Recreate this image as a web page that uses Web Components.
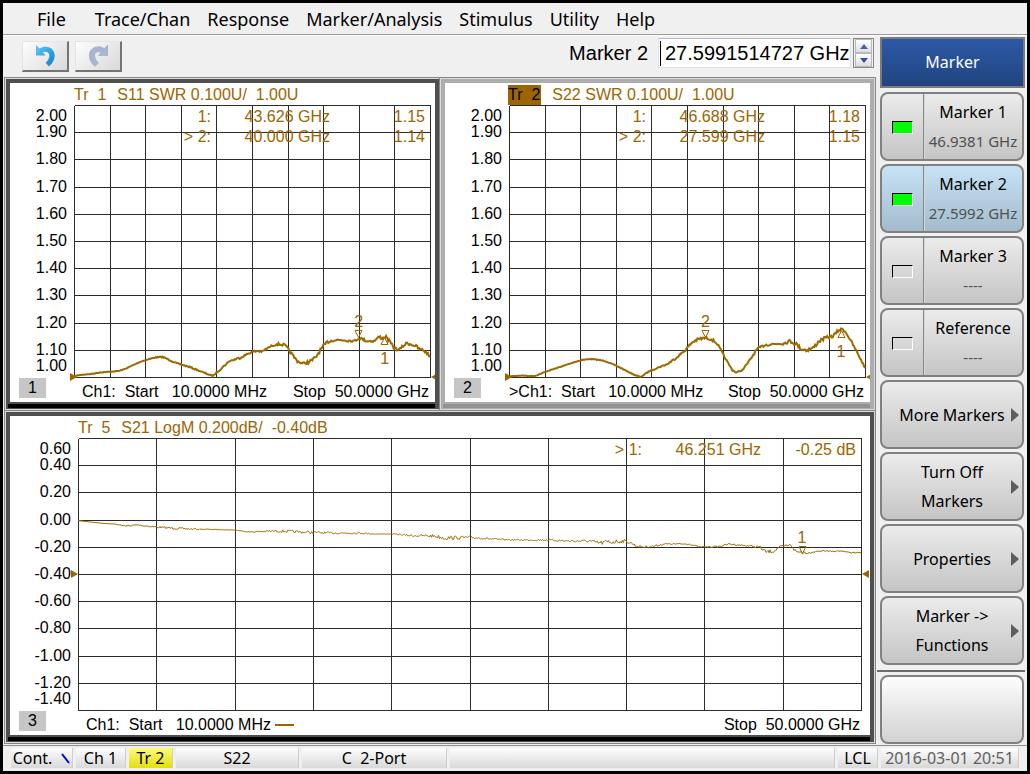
<!DOCTYPE html>
<html lang="en">
<head>
<meta charset="utf-8">
<title>Network Analyzer</title>
<style>
  body { margin: 0; min-height: 100vh; display: grid; background: #000; font-family: "Liberation Sans", Arial, sans-serif; font-size: 16px; color: #000; }
</style>
</head>
<body>
<analyzer-shell>
  <menu-bar slot="menu"></menu-bar>
  <tool-bar slot="tools"></tool-bar>
  <plot-window number="1" trace="s11"></plot-window>
  <plot-window number="2" trace="s22" active></plot-window>
  <plot-window number="3" trace="s21" wide></plot-window>
  <side-panel slot="side" heading="Marker">
    <marker-key name="Marker 1" value="46.9381 GHz" on></marker-key>
    <marker-key name="Marker 2" value="27.5992 GHz" on selected></marker-key>
    <marker-key name="Marker 3" value="----"></marker-key>
    <marker-key name="Reference" value="----"></marker-key>
    <soft-key more>More Markers</soft-key>
    <soft-key more>Turn Off<br>Markers</soft-key>
    <soft-key more>Properties</soft-key>
    <soft-key more>Marker -&gt;<br>Functions</soft-key>
    <soft-key slot="extra" blank></soft-key>
  </side-panel>
  <status-bar slot="status">
    <status-cell style="--w:62px">Cont.<svg width="9" height="11" viewBox="0 0 9 11" style="margin-left:9px"><path d="M1 1L8 10" stroke="#0000e8" stroke-width="2"/></svg></status-cell>
    <status-cell style="--w:50px">Ch 1</status-cell>
    <status-cell style="--w:44px" hot>Tr 2</status-cell>
    <status-cell style="--w:123px">S22</status-cell>
    <status-cell style="--w:145px">C&nbsp; 2-Port</status-cell>
    <status-cell grow></status-cell>
    <status-cell style="--w:40px">LCL</status-cell>
    <status-cell style="--w:138px" dim>2016-03-01 20:51</status-cell>
  </status-bar>
</analyzer-shell>

<script>
function mount(el, html) {
  const t = document.createElement('template');
  t.innerHTML = html;
  el.attachShadow({ mode: 'open' }).append(t.content.cloneNode(true));
  return el.shadowRoot;
}

customElements.define('analyzer-shell', class extends HTMLElement {
  constructor() {
    super();
    mount(this, `<style>
      :host { display: grid; grid-template-rows: auto 1fr auto; margin: 3px; background: #f0f0f0; }
      .body { display: grid; grid-template-columns: minmax(0, 1fr) 150px; }
      .left { display: grid; grid-template-rows: auto 1fr; }
      main { display: grid; grid-template-columns: repeat(2, minmax(0, 1fr)); grid-template-rows: 1fr 1fr; gap: 3px 2px; padding: 2px 3px; }
    </style>
    <slot name="menu"></slot>
    <div class="body">
      <div class="left"><slot name="tools"></slot><main><slot></slot></main></div>
      <slot name="side"></slot>
    </div>
    <slot name="status"></slot>`);
  }
});

customElements.define('menu-bar', class extends HTMLElement {
  constructor() {
    super();
    mount(this, `<style>
      :host { display: block; border-bottom: 1px solid #9a9a9a; box-shadow: 0 1px #fff; margin-bottom: 1px; }
      nav { display: flex; gap: 17px; padding: 0 34px; height: 31px; align-items: center; }
      button { all: unset; font: 18px/24px "Noto Sans", sans-serif; white-space: nowrap; }
      button:first-child { margin-right: 12px; }
    </style>
    <nav>${['File', 'Trace/Chan', 'Response', 'Marker/Analysis', 'Stimulus', 'Utility', 'Help'].map(t => `<button>${t}</button>`).join('')}</nav>`);
  }
});

customElements.define('tool-bar', class extends HTMLElement {
  constructor() {
    super();
    const arrow = 'M0 0V10.5H9.5L6.8 7.3C11 5.6 14.4 8 13 12.5C12.3 15 11 16.4 9.6 17.8L13 21.4C16.4 18.6 19 14.5 18.6 9.6C18 2.4 9.6 -.6 3.6 3.6Z';
    mount(this, `<style>
      :host { display: flex; align-items: center; height: 41px; padding: 0 3px 0 19px; gap: 6px; box-sizing: border-box; }
      .hist { width: 47px; height: 31px; padding: 0; border: solid; border-width: 1px 2px 2px 1px; border-color: #e4e4e4 #747474 #747474 #e4e4e4; background: linear-gradient(135deg, #fdfdfd, #d9d9d9); display: grid; place-items: center; }
      label { margin-left: auto; font-size: 20px; padding-right: 4px; align-self: start; line-height: 34px; }
      .field { display: flex; align-items: center; align-self: start; margin-top: 2px; width: 193px; height: 30px; box-sizing: border-box; background: #fff; border: 1px solid #dfe3e8; border-top-color: #b5b9bf; padding: 1px 0 1px 1px; }
      .field i { width: 1px; height: 25px; background: #000; }
      input { flex: 1; min-width: 0; border: 0; padding: 0 0 0 4px; background: none; outline: 0; font: 20px/24px "Liberation Sans", Arial, sans-serif; color: #000; }
      .spin { display: grid; grid-template-rows: 1fr 1fr; width: 21px; height: 30px; box-sizing: border-box; align-self: start; margin: 2px 0 0 -4px; border: 1px solid #888; background: #f0f0f0; }
      .spin button { border: 1px solid #b9b9b9; margin: 0 1px; padding: 0; background: linear-gradient(#fff, #dedede); display: grid; place-items: center; }
    </style>
    <button class="hist" aria-label="Undo"><svg width="19" height="22" viewBox="0 0 19 22"><defs><linearGradient id="g" x1="0" x2="1" y1="0" y2="1"><stop offset="0" stop-color="#63c8f7"/><stop offset="1" stop-color="#0b83cd"/></linearGradient></defs><path d="${arrow}" fill="url(#g)"/></svg></button>
    <button class="hist" aria-label="Redo"><svg width="19" height="22" viewBox="0 0 19 22"><path d="${arrow}" fill="#a9b5d0" stroke="#9aa8c6" stroke-width=".6" transform="matrix(-1 0 0 1 19 0)"/></svg></button>
    <label for="v">Marker 2</label>
    <div class="field"><i></i><input id="v" value="27.5991514727 GHz"></div>
    <div class="spin">
      <button aria-label="Up"><svg width="8" height="5"><path d="M4 0L8 5H0Z" fill="#4a62a8"/></svg></button>
      <button aria-label="Down"><svg width="8" height="5"><path d="M4 5L8 0H0Z" fill="#3350a5"/></svg></button>
    </div>`);
  }
});

/* Each trace: plot-space size, axis labels, readouts, markers and
   sample points as [x, y, ripple], y growing downwards. */
const swrAxis = ['2.00', '1.90', '1.80', '1.70', '1.60', '1.50', '1.40', '1.30', '1.20', '1.10', '1.00'];
const TRACES = {
  s11: {
    w: 357, h: 272, id: 'Tr  1', title: 'S11 SWR 0.100U/  1.00U', channel: 'Ch1:', axis: swrAxis, ref: 272,
    reads: [['1:', '43.626 GHz', '1.15'], ['> 2:', '40.000 GHz', '1.14']],
    marks: [['2', 285.5, 233, 'down'], ['1', 311.5, 232, 'up']],
    pts: [[0,271,0],[6,270,0],[17,269,.3],[26,267.5,.3],[45,266,.3],[51,264,.3],[66,257,.3],[72,255,.3],[81,252.5,.5],[89,252,.6],[96,255,.6],[102,258,.6],[116,262,.6],[126,266,.5],[139,271,.5],[146,265,.7],[156,256,.8],[166,253,1],[178,247,1],[184,246,1.2],[189,246.5,1],[196,242,.8],[203,239,1.2],[211,240,1.2],[214,243,1.2],[219,250,1.5],[224,256,1.2],[229,258.5,1],[236,257,1.8],[242,253,1.8],[247,245,1.8],[254,237,1.5],[261,235,1.2],[271,235,1.4],[281,236,1],[286,233,1.6],[294,236,1.2],[301,236,1],[306,232,1.8],[310,233,2],[312,231,2],[316,236,1.6],[321,243,1.5],[326,245,1.5],[330,241,1.2],[334,238,1.5],[341,240,2.2],[346,244,1.8],[350,245,1.6],[354,248,1.5],[357,252,1]]
  },
  s22: {
    w: 357, h: 272, id: 'Tr  2', title: 'S22 SWR 0.100U/  1.00U', channel: '>Ch1:', axis: swrAxis, ref: 272,
    reads: [['1:', '46.688 GHz', '1.18'], ['> 2:', '27.599 GHz', '1.15']],
    marks: [['2', 197, 233, 'down'], ['1', 333, 225, 'up']],
    pts: [[0,271.5,.4],[12,270.5,.3],[21,271,.3],[26,271,.3],[36,267,.2],[51,262,.2],[66,257,.2],[73,255,.3],[81,254,.3],[91,255,.3],[96,256,.3],[106,260,.3],[116,265,.3],[126,270,.3],[132,272,.3],[141,266,.6],[151,262,.6],[159,259,.7],[166,254,1],[176,246,1],[184,237,1.4],[191,234,1.6],[197,233,1.4],[203,234,1.4],[209,239,1],[214,248,1],[219,257,.8],[224,265,.6],[228,267.5,.5],[234,265,.6],[241,256,1],[248,245,1.4],[256,240,1.2],[266,239,1.4],[276,238,1.4],[282,236,1.8],[288,239,1.8],[293,244,1.8],[299,245,1.8],[305,243,1.8],[311,236,2],[317,233,1.5],[325,231,1.5],[331,225,1.5],[335,224,1.5],[339,229,1.5],[344,238,1.2],[351,251,1],[357,263,.8]]
  },
  s21: {
    w: 784, h: 272, id: 'Tr  5', title: 'S21 LogM 0.200dB/  -0.40dB', channel: 'Ch1:', ref: 136,
    axis: ['0.60', '0.40', '0.20', '0.00', '-0.20', '-0.40', '-0.60', '-0.80', '-1.00', '-1.20', '-1.40'],
    reads: [['> 1:', '46.251 GHz', '-0.25 dB']],
    marks: [['1', 725, 116, 'down']],
    pts: [[0,82.5,0],[12,84,0],[27,85.5,0],[37,86,.2],[47,88,.8],[60,87,.8],[78,89,.9],[92,90,1.1],[112,91,.8],[137,91.5,.2],[157,92,.2],[172,94,.4],[182,93.5,.7],[202,93,1.4],[222,94,1.4],[252,95,1],[282,95,1],[297,96,.2],[317,96,.3],[332,97.5,1],[357,98,1.7],[367,100,2],[392,99.5,1.6],[402,100,1],[422,101.5,.7],[447,102,.7],[472,102,1],[492,103,1.3],[512,103,1.4],[522,105,2],[532,104,3],[547,103,1.6],[554,105,1.4],[559,108,1.2],[567,109,1.2],[577,108,1.2],[587,106,.7],[612,106,.7],[622,109,.7],[642,108.5,.8],[652,106,.8],[672,108,1],[682,109,1.6],[689,114,1.8],[697,113,1.8],[702,109,1],[714,107,1.6],[719,114,2],[725,114,2],[730,115,1],[742,113,.6],[762,113,.7],[772,114.5,.7],[784,115,.7]]
  }
};

function tracePath(pts) {
  let seed = 7, d = '';
  const rnd = () => (seed = (seed * 16807) % 2147483647) / 2147483647 * 2 - 1;
  for (let i = 0; i < pts.length - 1; i++) {
    const [x0, y0, a0] = pts[i], [x1, y1, a1] = pts[i + 1];
    for (let x = x0; x < x1; x++) {
      const t = (x - x0) / (x1 - x0);
      d += (d ? 'L' : 'M') + x + ' ' + (y0 + (y1 - y0) * t + (a0 + (a1 - a0) * t) * rnd()).toFixed(1);
    }
  }
  const last = pts[pts.length - 1];
  return d + 'L' + last[0] + ' ' + last[1];
}

customElements.define('trace-plot', class extends HTMLElement {
  connectedCallback() {
    if (this.shadowRoot) return;
    const t = TRACES[this.getAttribute('trace')];
    const pc = (v, m) => (v / m * 100).toFixed(2) + '%';
    let lines = '';
    for (let i = 0; i <= 10; i++) {
      lines += `<line x1="${i * 10}%" x2="${i * 10}%" y1="0" y2="100%"/><line y1="${i * 10}%" y2="${i * 10}%" x1="0" x2="100%"/>`;
    }
    mount(this, `<style>
      :host { display: block; position: relative; color: #9c6500; }
      svg { overflow: visible; display: block; }
      .layer { position: absolute; inset: 0; width: 100%; height: 100%; }
      .grid { stroke: #2b2b2b; shape-rendering: crispEdges; transform: translate(.5px, .5px); }
      .trace { fill: none; stroke: #9c6a00; stroke-width: var(--pen, 2px); vector-effect: non-scaling-stroke; }
      table { position: absolute; top: 2px; right: 5px; border-collapse: collapse; line-height: 20px; text-align: right; white-space: pre; }
      td { padding: 0; }
      td:nth-child(2) { width: 119px; }
      td:nth-child(3) { width: 95px; }
      .mark { position: absolute; width: 10px; margin-left: -5px; display: flex; flex-direction: column; align-items: center; line-height: 16px; }
      .down { transform: translateY(-100%); }
      .up { flex-direction: column-reverse; gap: 6px; }
      .ref { position: absolute; margin-top: -5px; }
      .l { left: var(--ref, -4px); } .r { right: -8px; }
    </style>
    <svg class="layer grid">${lines}</svg>
    <svg class="layer" viewBox="0 0 ${t.w} ${t.h}" preserveAspectRatio="none"><path class="trace" d="${tracePath(t.pts)}"/></svg>
    <table>${t.reads.map(r => `<tr>${r.map(c => `<td>${c.replace('>', '&gt;')}</td>`).join('')}</tr>`).join('')}</table>
    ${t.marks.map(([n, x, y, dir]) => `<div class="mark ${dir}" style="left:${pc(x, t.w)};top:${pc(y, t.h)}"><span>${n}</span><svg width="9" height="8" viewBox="0 0 9 8"><path d="${dir === 'down' ? 'M1 .5H8L4.5 7.5Z' : 'M1 7.5H8L4.5 .5Z'}" fill="none" stroke="#9c6500"/></svg></div>`).join('')}
    <svg class="ref l" style="top:${pc(t.ref, t.h)}" width="7" height="10"><path d="M0 1L7 5L0 9Z" fill="#9c6500"/></svg>
    <svg class="ref r" style="top:${pc(t.ref, t.h)}" width="7" height="10"><path d="M7 1L0 5L7 9Z" fill="#9c6500"/></svg>`);
  }
});

customElements.define('plot-window', class extends HTMLElement {
  connectedCallback() {
    if (this.shadowRoot) return;
    const t = TRACES[this.getAttribute('trace')];
    mount(this, `<style>
      :host { --frame: #4f4f4f; --shade: #000; --axis: 64px; --end: 5px; display: flex; flex-direction: column; background: var(--frame); padding: 4px 4px 1px; box-shadow: 0 0 0 1px #dcdcdc, 0 0 0 2px #858585; }
      :host([active]) { --frame: #adadad; --shade: #929292; }
      :host([wide]) { grid-column: 1 / -1; --axis: 68px; --end: 9px; --ref: -7px; --pen: 1px; }
      .view { flex: 1; display: grid; grid-template-columns: var(--axis) minmax(0, 1fr) var(--end); grid-template-rows: 22px minmax(220px, 1fr) 25px; background: #fff; overflow: hidden; }
      .shade { height: 4px; margin: 2px 0 0 -2px; background: var(--shade); }
      .title { grid-column: 2; display: flex; gap: 11px; align-items: center; color: #9c6500; white-space: pre; line-height: 20px; padding-top: 1px; }
      :host([active]) .id { background: #9c6500; color: #000; margin-left: -1px; padding-right: 1px; }
      .axis { grid-column: 1; display: flex; flex-direction: column; text-align: right; padding: 0 7px; line-height: 22px; }
      .axis span { flex: 2 1 0; min-height: 0; display: flex; align-items: center; justify-content: flex-end; }
      .axis span:first-child { flex-grow: 1; align-items: flex-start; }
      .axis span:last-child { flex-grow: 1; align-items: flex-end; }
      .badge { width: 27px; height: 20px; margin: 1px 0 0 9px; background: #c6c6c6; text-align: center; line-height: 20px; }
      .foot { display: flex; align-items: center; padding: 0 1px 0 8px; white-space: pre; height: 30px; line-height: 20px; }
      :host([active]) .foot { padding-left: 0; }
      .foot b { width: 19px; height: 2px; margin-left: 4px; background: #9c6500; display: none; }
      :host([wide]) .foot b { display: block; }
      .stop { margin-left: auto; }
    </style>
    <div class="view">
      <div class="title"><span class="id">${t.id}</span><span>${t.title}</span></div>
      <div class="axis">${t.axis.map(a => `<span>${a}</span>`).join('')}</div>
      <trace-plot trace="${this.getAttribute('trace')}"></trace-plot><i></i>
      <div class="badge">${this.getAttribute('number')}</div>
      <div class="foot"><span>${t.channel.replace('>', '&gt;')}  Start   10.0000 MHz</span><b></b><span class="stop">Stop  50.0000 GHz</span></div>
    </div>
    <div class="shade"></div>`);
  }
});

customElements.define('side-panel', class extends HTMLElement {
  connectedCallback() {
    if (this.shadowRoot) return;
    mount(this, `<style>
      :host { display: flex; flex-direction: column; padding-top: 1px; font: 16px/29px "Noto Sans", sans-serif; }
      h2 { margin: 0 2px 4px 3px; height: 51px; box-sizing: border-box; border: 2px solid #7b7b7b; background: linear-gradient(#2c59a6, #214480); color: #fff; font: inherit; line-height: 47px; text-align: center; }
      .keys { display: grid; gap: 3px; padding: 0 3px; }
      hr { width: 148px; height: 2px; margin: 5px 0 3px; border: 0; background: #6c6c6c; }
    </style>
    <h2>${this.getAttribute('heading')}</h2>
    <div class="keys"><slot></slot></div><hr><div class="keys"><slot name="extra"></slot></div>`);
  }
});

const keyBox = `display: grid; height: 69px; box-sizing: border-box; border: 2px solid #808080; border-radius: 8px; background: linear-gradient(#ebebeb, #c5c5c5);`;

customElements.define('soft-key', class extends HTMLElement {
  connectedCallback() {
    if (this.shadowRoot) return;
    mount(this, `<style>
      :host { ${keyBox} position: relative; }
      :host([blank]) { background: linear-gradient(#fdfdfd, #d2d2d2); }
      button { all: unset; text-align: center; display: grid; align-content: center; padding-top: 1px; }
      svg { position: absolute; right: 3px; top: 26px; display: none; }
      :host([more]) svg { display: block; }
    </style>
    <button><span><slot></slot></span></button>
    <svg width="8" height="14"><path d="M0 0L8 7L0 14Z" fill="#5d5d5d"/></svg>`);
  }
});

customElements.define('marker-key', class extends HTMLElement {
  connectedCallback() {
    if (this.shadowRoot) return;
    const name = this.getAttribute('name');
    mount(this, `<style>
      :host { ${keyBox} grid-template-columns: 42px 1fr; }
      :host([selected]) { background: linear-gradient(#c7e2f5, #a3bccd); }
      .tick { display: grid; place-items: center; padding-top: 1px; border-right: 1px solid #858585; box-shadow: 1px 0 #d9d9d9; }
      input { appearance: none; margin: 0; width: 21px; height: 13px; border: 1px solid; border-color: #000 #fff #fff #000; }
      input:checked { background: #0f0; }
      button { all: unset; display: grid; align-content: center; text-align: center; white-space: nowrap; padding-top: 1px; }
      small { font-size: 15px; color: #505050; }
    </style>
    <label class="tick"><input type="checkbox" aria-label="${name} on" ${this.hasAttribute('on') ? 'checked' : ''}></label>
    <button><span>${name}</span><small>${this.getAttribute('value')}</small></button>`);
  }
});

customElements.define('status-bar', class extends HTMLElement {
  constructor() {
    super();
    mount(this, `<style>
      :host { display: flex; gap: 3px; margin-top: 1px; border-top: 1px solid #8b8b8b; padding: 2px 8px 3px; background: #f0eeee; font: 16px/20px "Noto Sans", sans-serif; white-space: nowrap; }
    </style><slot></slot>`);
  }
});

customElements.define('status-cell', class extends HTMLElement {
  constructor() {
    super();
    mount(this, `<style>
      :host { display: flex; align-items: center; justify-content: center; width: var(--w); height: 20px; line-height: 22px; box-sizing: border-box; border-right: 1px solid #cfcfcf; background: linear-gradient(#fdfdfd, #d9d9d9); }
      :host([grow]) { flex: 1; }
      :host([hot]) { background: linear-gradient(#fbfb7a, #e3de10); }
      :host([dim]) { color: #606060; }
    </style><slot></slot>`);
  }
});
</script>
</body>
</html>
